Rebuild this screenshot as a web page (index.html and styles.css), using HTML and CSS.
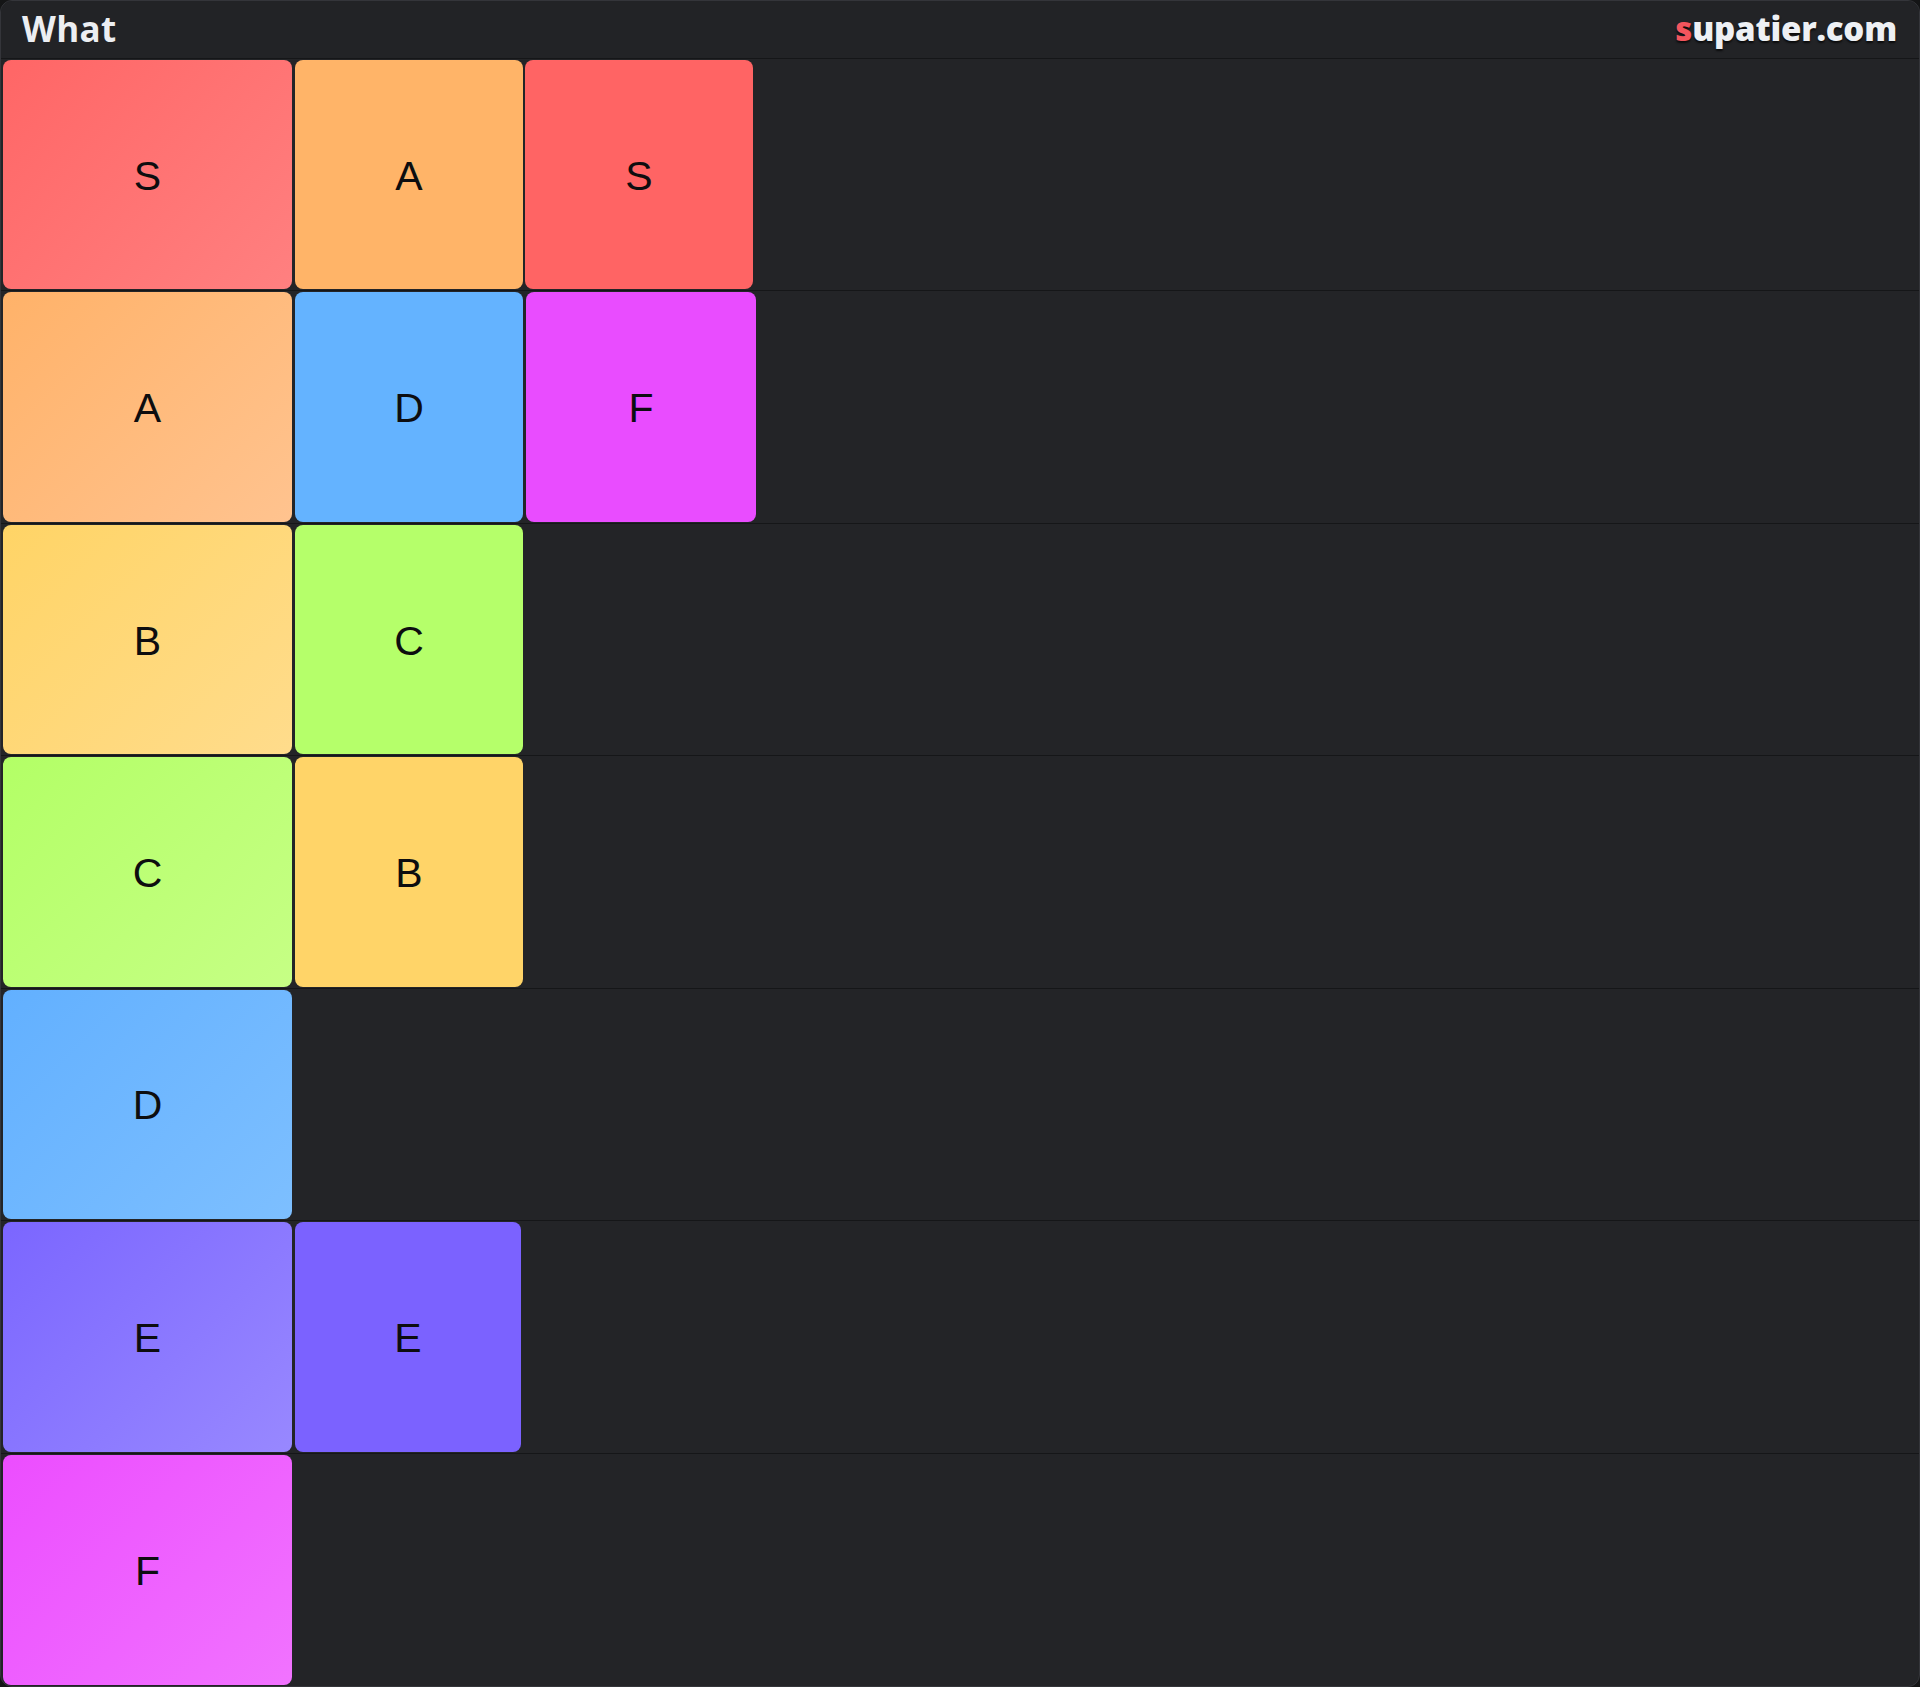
FILE: index.html
```html
<!DOCTYPE html>
<html lang="en">
<head>
<meta charset="utf-8">
<title>What - supatier.com</title>
<link rel="stylesheet" href="styles.css">
</head>
<body>
<div class="board">
  <header class="head">
    <h1 class="title">What</h1>
    <div class="brand"><span class="brand-s">s</span>upatier.com</div>
  </header>
  <div class="row">
    <div class="label t-s">S</div>
    <div class="item i-a">A</div>
    <div class="item i-s">S</div>
  </div>
  <div class="row">
    <div class="label t-a">A</div>
    <div class="item i-d">D</div>
    <div class="item i-f wide">F</div>
  </div>
  <div class="row">
    <div class="label t-b">B</div>
    <div class="item i-c">C</div>
  </div>
  <div class="row">
    <div class="label t-c">C</div>
    <div class="item i-b">B</div>
  </div>
  <div class="row">
    <div class="label t-d">D</div>
  </div>
  <div class="row">
    <div class="label t-e">E</div>
    <div class="item i-e narrow">E</div>
  </div>
  <div class="row last">
    <div class="label t-f">F</div>
  </div>
</div>
</body>
</html>
```

FILE: styles.css
```css
html, body {
  margin: 0;
  padding: 0;
  background: #141516;
}
.board {
  box-sizing: border-box;
  width: 1920px;
  height: 1687px;
  display: grid;
  grid-template-rows: 58px repeat(7, 1fr);
  background: #232427;
  border: 1px solid #34353a;
  border-radius: 12px;
  overflow: hidden;
}
.head {
  display: flex;
  align-items: center;
  justify-content: space-between;
  padding: 0 22px 2px 21px;
  background: #222326;
  border-bottom: 1px solid #151618;
}
.title {
  margin: 0;
  font-family: "Open Sans", sans-serif;
  font-weight: 700;
  font-size: 35px;
  color: #eceef2;
  letter-spacing: 0.3px;
}
.brand {
  font-family: "Open Sans", sans-serif;
  font-weight: 800;
  font-size: 33px;
  color: #eef0f4;
  letter-spacing: -0.2px;
  text-shadow: 0 2px 2px rgba(0,0,0,0.7);
}
.brand-s {
  color: #f2555d;
}
.row {
  display: flex;
  gap: 2px;
  padding: 1px 0 1px 2px;
  border-bottom: 1px solid #151618;
  min-height: 0;
}
.row.last {
  border-bottom: none;
}
.label, .item {
  display: flex;
  align-items: center;
  justify-content: center;
  padding-top: 3px;
  box-sizing: border-box;
  border-radius: 8px;
  font-family: "Liberation Sans", Arial, sans-serif;
  font-size: 41px;
  color: #0d0d0f;
}
.label {
  width: 289px;
  margin-right: 1px;
}
.item {
  width: 228px;
}
.item.wide {
  width: 230px;
  margin-left: 1px;
}
.item.narrow {
  width: 226px;
}
.t-s { background: linear-gradient(135deg, #ff6666, #ff8080); }
.t-a { background: linear-gradient(135deg, #ffb269, #ffc38f); }
.t-b { background: linear-gradient(135deg, #ffd466, #ffdc8c); }
.t-c { background: linear-gradient(135deg, #b3ff66, #c6ff85); }
.t-d { background: linear-gradient(135deg, #62b0ff, #7dbfff); }
.t-e { background: linear-gradient(135deg, #7b66ff, #9888ff); }
.t-f { background: linear-gradient(135deg, #ec4dff, #f173ff); }
.i-s { background: #ff6464; }
.i-a { background: #ffb468; }
.i-b { background: #ffd468; }
.i-c { background: #b5ff6a; }
.i-d { background: #64b3ff; }
.i-e { background: #7b62ff; }
.i-f { background: #e94cff; }
```
